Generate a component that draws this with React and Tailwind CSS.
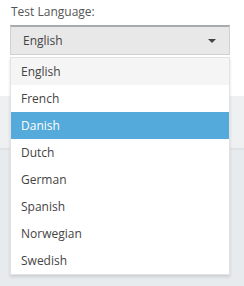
import React from "react";

const langs = ["English", "French", "Danish", "Dutch", "German", "Spanish", "Norwegian", "Swedish"];

export default function App() {
  return (
    <div className="relative w-[244px] h-[286px] overflow-hidden bg-white font-['Open_Sans',sans-serif] text-[12px]">
      <div className="h-[96px] px-[11px] pt-[3px]">
        <div className="leading-[17px] text-[#555]">Test Language:</div>
        <div className="mt-[5px] ml-[-1px] w-[220px] h-[30px] flex items-center justify-between border border-[#cfd2d4] border-t-2 border-t-[#a9acae] bg-[#e8e8e8] pl-[12px] pr-[13px] text-[#444]">
          <span>English</span>
          <svg width="8" height="4" viewBox="0 0 8 4"><path d="M0 0H8L4 4Z" fill="#444" /></svg>
        </div>
      </div>
      <div className="h-[52px] bg-[#eef0f2]" />
      <div className="h-[2px] bg-[#dfe2e5]" />
      <div className="h-[136px] bg-[#e8ebee]" />

      <div className="absolute left-[10px] top-[57px] w-[220px] border border-[#e2e2e2] bg-white shadow-[0_2px_3px_rgba(0,0,0,0.12)]">
        {langs.map((l, i) => (
          <div
            key={l}
            className={
              "h-[27px] flex items-center pl-[10px] " +
              (l === "Danish"
                ? "bg-[#54aadb] text-white"
                : i === 0
                ? "bg-[#f5f5f5] text-[#444]"
                : "text-[#444]")
            }
          >
            {l}
          </div>
        ))}
      </div>
    </div>
  );
}
